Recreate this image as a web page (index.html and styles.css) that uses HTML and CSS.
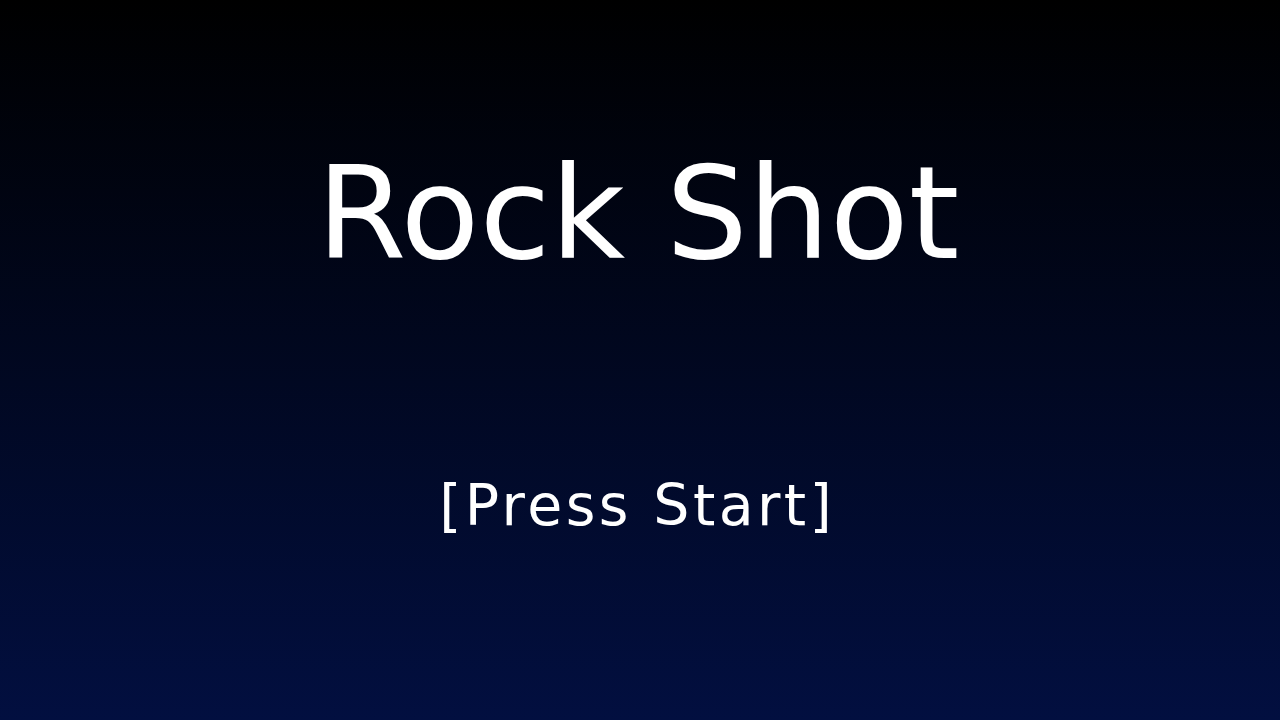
FILE: index.html
```html
<!DOCTYPE html>
<html>
<head>
<meta charset="utf-8">
<link rel="stylesheet" href="styles.css">
</head>
<body>
<main class="screen">
  <h1 class="title">Rock Shot</h1>
  <p class="prompt">[Press Start]</p>
</main>
</body>
</html>
```
FILE: styles.css
```css
html, body {
  margin: 0;
  padding: 0;
  width: 1280px;
  height: 720px;
  overflow: hidden;
}
.screen {
  width: 1280px;
  height: 720px;
  background: linear-gradient(to bottom, #000000 0%, #020f40 100%);
  display: flex;
  flex-direction: column;
  align-items: center;
  font-family: "DejaVu Sans", sans-serif;
  color: #ffffff;
}
.title {
  margin: 0;
  margin-top: 148px;
  margin-right: 4px;
  font-size: 129px;
  font-weight: normal;
  line-height: 130px;
}
.prompt {
  margin: 0;
  margin-top: 198px;
  font-size: 57px;
  line-height: 58px;
  letter-spacing: 3.4px;
  padding-right: 5.6px;
}
```
